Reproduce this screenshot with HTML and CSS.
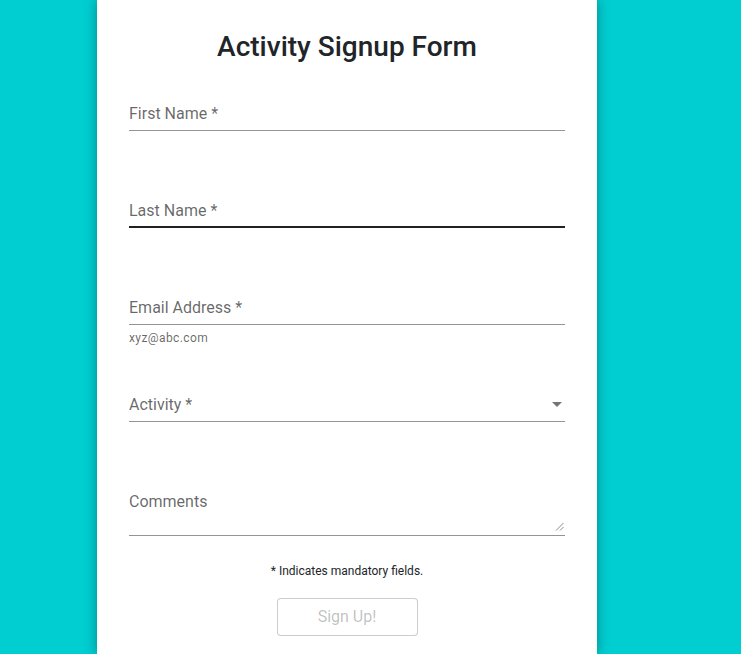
FILE: index.html
```html
<!DOCTYPE html>
<html lang="en">
<head>
<meta charset="utf-8">
<title>Activity Signup Form</title>
<link rel="stylesheet" href="styles.css">
</head>
<body>
<div class="page">
  <main class="card">
    <h1 class="title">Activity Signup Form</h1>
    <form class="form">
      <div class="field">
        <div class="control"><span class="label">First Name *</span></div>
      </div>
      <div class="field">
        <div class="control hover"><span class="label">Last Name *</span></div>
      </div>
      <div class="field">
        <div class="control"><span class="label">Email Address *</span></div>
        <p class="helper">xyz@abc.com</p>
      </div>
      <div class="field">
        <div class="control select"><span class="label">Activity *</span>
          <svg class="arrow" width="10" height="5" viewBox="0 0 10 5" aria-hidden="true"><path d="M0 0l5 5 5-5z" fill="#757575"/></svg>
        </div>
      </div>
      <div class="field comments">
        <div class="control multiline">
          <span class="label">Comments</span>
          <div class="resize-row">
            <svg class="grip" width="9" height="9" viewBox="0 0 9 9" aria-hidden="true">
              <path d="M1 8.5L8.5 1M5 8.5L8.5 5" stroke="#8a8a8a" stroke-width="1" fill="none"/>
            </svg>
          </div>
        </div>
      </div>
      <p class="note">* Indicates mandatory fields.</p>
      <div class="actions">
        <button type="button" class="submit" disabled>Sign Up!</button>
      </div>
    </form>
  </main>
</div>
</body>
</html>
```
FILE: styles.css
```css
html, body {
  margin: 0;
  padding: 0;
  height: 100%;
}
body {
  background: #00ced1;
  font-family: Roboto, "Liberation Sans", Arial, sans-serif;
  overflow: hidden;
}
.page {
  padding-left: 97px;
}
.card {
  width: 500px;
  box-sizing: border-box;
  min-height: 654px;
  background: #ffffff;
  padding: 0 32px;
  box-shadow: 0 0 12px rgba(0, 0, 0, 0.35);
  display: flex;
  flex-direction: column;
}
.title {
  margin: 31px 0 0;
  font-size: 28px;
  line-height: 32px;
  font-weight: 500;
  color: #212529;
  text-align: center;
}
.form {
  margin-top: 39px;
  display: flex;
  flex-direction: column;
}
.field {
  height: 97px;
  flex: none;
}
.field.comments {
  height: auto;
}
.control {
  display: flex;
  align-items: center;
  padding-bottom: 4px;
  border-bottom: 1px solid rgba(0, 0, 0, 0.42);
}
.control.hover {
  border-bottom-color: rgba(0, 0, 0, 0.87);
  box-shadow: inset 0 -1px 0 rgba(0, 0, 0, 0.87);
}
.label {
  flex: 1;
  font-size: 16px;
  line-height: 24px;
  color: rgba(0, 0, 0, 0.6);
}
.arrow {
  flex: none;
  margin-right: 3px;
  margin-top: -2px;
}
.control.multiline {
  flex-direction: column;
  align-items: stretch;
}
.resize-row {
  height: 17px;
  display: flex;
  justify-content: flex-end;
  align-items: flex-end;
}
.grip {
  margin-right: 1px;
}
.helper {
  margin: 4px 0 0;
  font-size: 12px;
  line-height: 1.66;
  color: rgba(0, 0, 0, 0.6);
  letter-spacing: 0.4px;
}
.note {
  margin: 27px 0 0;
  font-size: 12px;
  line-height: 16px;
  color: #212529;
  text-align: center;
}
.actions {
  margin-top: 19px;
  display: flex;
  justify-content: center;
}
.submit {
  width: 141px;
  height: 38px;
  box-sizing: border-box;
  padding: 6px 16px;
  border: 1px solid rgba(0, 0, 0, 0.2);
  border-radius: 4px;
  background: #ffffff;
  font-family: Roboto, "Liberation Sans", Arial, sans-serif;
  font-size: 16px;
  line-height: 24px;
  color: rgba(0, 0, 0, 0.26);
}
```
